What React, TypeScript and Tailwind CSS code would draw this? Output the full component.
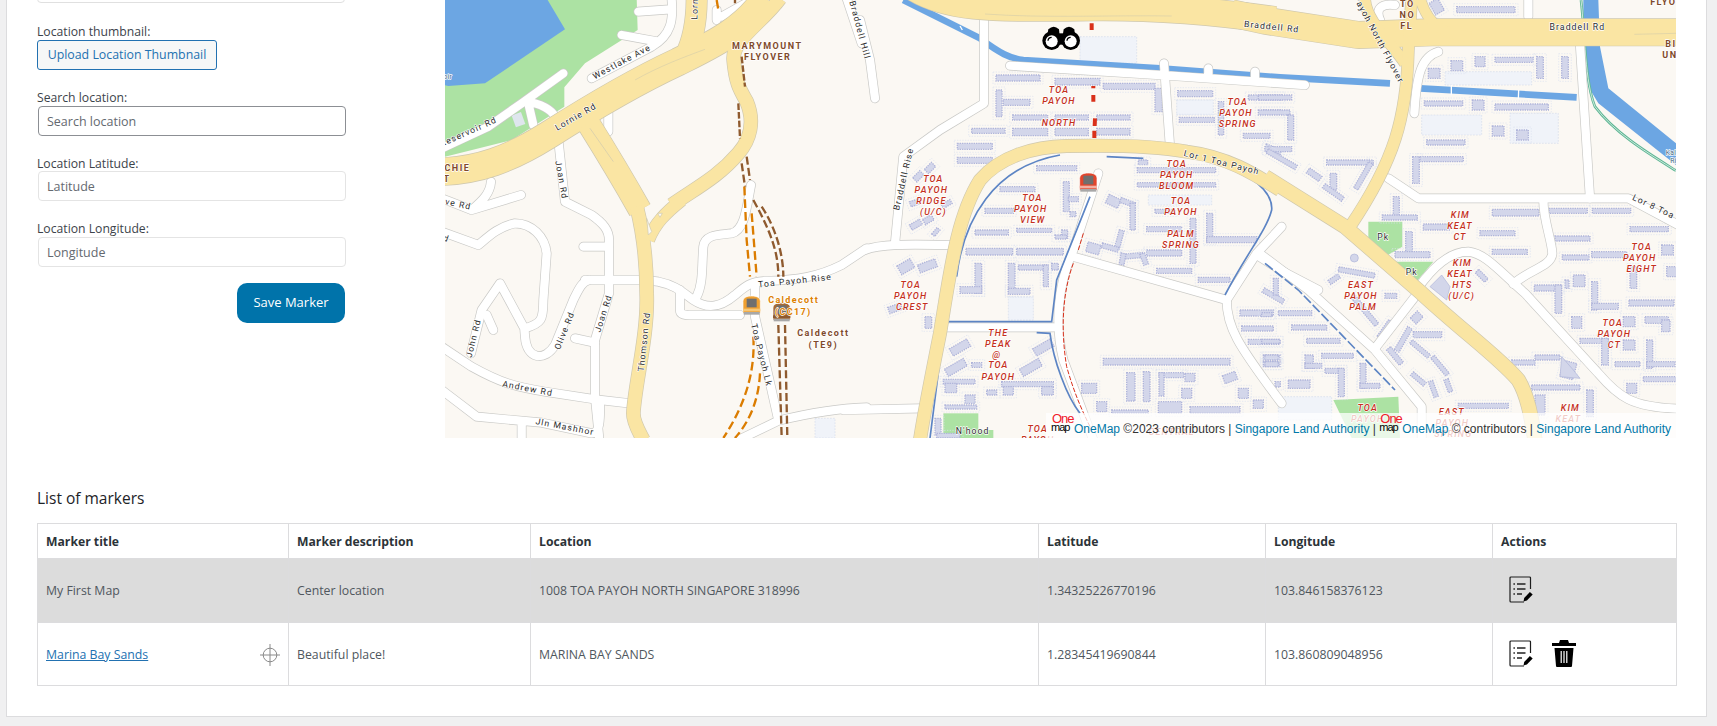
const land = "#fbf8f3";

type Bld = number[];

interface Area {
    x: number;
    minor: string[];
    major: [string, number][];
    blds: Bld[];
    estates: Bld[];
}

const areas: Area[] = [
    {
        x: 0,
        minor: [
            "M-10,445 L130,380 L230,310 L355,220",
            "M240,305 C290,310 320,330 330,350 M250,310 L265,375",
            "M440,235 L620,140 C680,105 685,60 680,0 M530,105 L640,125 M580,35 L675,28",
            "M340,420 L360,605 L440,645 C475,670 492,690 492,720 L492,880 L450,1020 L450,1190 L462,1310",
            "M415,740 L490,740 M390,1015 L450,1028",
            "M420,840 L600,840 L640,845 C690,855 710,875 745,900 C790,930 830,920 870,885 C900,860 915,845 960,843 C1060,840 1120,830 1190,795 L1265,745",
            "M432,840 C410,845 400,870 385,900 L330,1035 C300,1085 245,1080 240,1010 L238,985 L165,850 L110,930 L78,1060",
            "M240,985 C290,970 295,960 295,900 L305,760 C300,710 260,670 210,670 C160,680 130,710 100,735 L-10,695",
            "M125,945 L145,990",
            "M-10,1040 L80,1100 C170,1150 210,1160 300,1175 L450,1198 L570,1212",
            "M-10,1170 L95,1250 L290,1268 L440,1300 C465,1300 465,1260 465,1215 M230,1265 L230,1320",
            "M-10,595 L80,630 L228,585 M80,630 C115,600 135,580 138,545",
            "M705,870 L705,930 C705,945 720,945 735,945 L885,945",
            "M755,890 C775,850 770,800 775,740 C780,700 830,705 860,700 C900,690 905,620 918,555",
            "M930,850 L930,950 L1000,1260 M880,1320 L1000,1262 C1090,1240 1170,1225 1265,1222",
            "M490,320 L490,395",
            "M815,60 L815,30 M830,50 L920,0",
            "M1205,-5 L1250,130",
        ],
        major: [
            ["M-10,515 C100,510 190,480 310,405 C420,335 560,250 700,185 C790,140 900,90 960,-5", 82],
            ["M720,170 C750,110 755,50 755,-5", 62],
            ["M1005,-5 C950,70 860,120 866,180 C872,250 885,270 905,305 C930,365 915,420 880,460 C820,530 760,560 680,615", 40],
            ["M430,370 C480,450 540,550 585,630", 68],
            ["M575,620 C595,700 605,800 605,880 C610,1000 570,1150 565,1240 C565,1270 585,1300 595,1320", 40],
            ["M610,720 C630,670 660,640 710,600", 36],
        ],
        blds: [],
        estates: [[1110,1255,60,59]],
    },
    {
        x: 1245,
        minor: [
            "M0,60 L30,180 L45,295",
            "M372,50 L372,310 L240,390 L130,470 L105,730",
            "M15,750 C60,730 160,733 275,735",
            "M255,982 L580,982",
            "M715,520 L640,750 C590,860 585,980 610,1080 L700,1320",
            "M640,770 L1100,900 L1190,760 L1265,680",
            "M1100,900 C1100,980 1130,1030 1265,1210",
            "M450,197 L900,225 L1335,255 M912,190 L930,440 M1045,205 L1045,230 M1185,215 L1185,240",
            "M-50,1230 L180,1225",
            "M1190,765 L1270,815 L1375,870",
        ],
        major: [
            ["M150,-45 C260,30 400,25 700,22 C900,20 1100,40 1245,60", 80],
            ["M180,1320 C190,1250 210,1150 240,1000 C270,820 290,650 360,540 C420,470 520,440 620,438 C760,435 900,440 980,455 C1100,470 1180,520 1260,570", 38],
        ],
        blds: [
            [408,225,132,18],[585,235,135,20],[730,250,155,18],[885,265,22,70],[408,270,18,80],[430,298,80,18],
            [458,345,105,15],[585,345,100,15],[710,345,100,15],[458,385,105,22],[585,385,100,22],[710,385,100,20],
            [335,385,100,15],[292,430,105,18],[292,472,105,18],
            [160,520,30,18,-45],[195,495,30,18,-45],[150,600,30,16,-20],[245,605,30,14,-30],[150,665,35,18,-30],[190,650,30,18,-30],[215,690,25,12,-50],
            [420,560,105,15],[375,625,85,15],[345,690,100,15],[470,685,105,12],[530,497,120,15],[610,545,18,90],[625,590,30,15],[630,635,18,15],[605,690,18,25],[585,705,35,12],
            [318,745,140,20],[470,745,140,20],[345,790,20,90],[300,860,65,20],[445,790,20,90],[445,865,65,18],[475,795,90,15],[550,795,15,65],[575,790,20,20],
            [115,785,45,30,-30],[175,785,55,25,-20],[85,915,40,20,-20],[195,950,20,35],
            [270,1030,60,25,-30],[520,1030,60,25,-30],[255,1090,65,25,-30],[480,1090,65,25,-30],[335,1088,30,14],
            [250,1138,95,14],[255,1150,35,28],[380,1170,30,15],[315,1185,30,25],[255,1215,95,12],[425,1145,155,15],[430,1160,30,25],[545,1160,35,25],[225,1255,18,50],[230,1300,70,14],
            [835,480,28,14],[832,503,235,15],[832,548,235,13],[885,628,60,12],[860,680,105,15],[860,750,105,18],[890,805,105,15],[990,655,18,135],[1040,640,18,85],[1040,710,150,18],[1015,832,95,15],
            [740,590,40,28,25],[780,600,45,15,20],[810,610,16,80],[770,690,15,60,15],[680,730,40,30,15],[725,735,50,15,15],[790,760,60,15,-5],[780,760,15,35,10],[845,760,15,35,-20],
            [953,272,105,18],[1075,305,16,100],[958,352,105,15],[1150,400,80,15],[1165,285,100,15],[1210,330,55,12],[1215,440,50,15,20],
            [730,1075,380,20],[800,1118,25,85],[850,1115,20,90],[897,1118,75,15],[897,1118,15,70],[975,1120,30,25],[965,1165,30,30],[1090,1120,40,25,-20],[1135,1165,30,30],[665,1150,45,30],[710,1205,30,30],[895,1205,70,35],[990,1220,150,20],[1180,1200,30,25],[755,1230,110,10],
            [1140,930,100,18],[1145,978,95,15],[1165,1018,95,15],[1210,1065,50,15],[1210,1085,50,15],
        ],
        estates: [
            [660,110,170,80],[445,890,75,70],[865,585,190,30],[950,300,110,45],
        ],
    },
    {
        x: 2460,
        minor: [
            "M520,155 C470,170 455,220 448,340",
            "M370,535 L460,595 L1090,595 L1240,675",
            "M835,600 C835,660 860,720 862,760 C860,800 790,810 745,852",
            "M945,135 L975,595",
            "M455,870 C510,790 560,755 610,755 C660,760 700,810 780,880 L1000,1120 C1060,1190 1100,1222 1240,1226",
            "M-10,765 L130,870 L330,1050 L470,1220 L470,1320",
            "M330,1045 L450,890",
            "M345,60 C330,25 350,10 390,15",
            "M790,0 L790,50",
        ],
        major: [
            ["M-100,40 L0,62 L280,105 L500,97 L1240,97", 80],
            ["M0,530 L240,680 L470,880 C600,1000 700,1070 760,1140 C790,1190 800,1260 810,1320", 42],
            ["M300,-5 C300,60 380,130 420,190", 32],
            ["M440,-5 L430,150 C425,350 390,480 255,680", 34],
            ["M465,-5 C490,80 540,105 620,110", 30],
        ],
        blds: [
            [-20,285,100,15],[-20,330,95,15],[68,345,18,75],[0,440,80,15],[0,470,100,15,30],[125,515,45,18,35],[185,480,140,15],[195,520,20,50],[170,570,70,15,35],[250,520,90,15,-60],
            [690,172,115,15],[815,170,20,65],[890,170,20,65],[558,182,35,30],[630,170,30,30],[490,205,35,30],[575,20,175,18],[500,0,30,40,-30],
            [478,303,115,15],[622,300,35,30],[690,312,160,18],[682,378,35,30],[755,390,35,30],[485,420,115,15],[465,470,130,15],[443,470,20,80],
            [385,590,18,60],[352,645,105,15],[475,672,80,18],[645,692,105,15],[422,695,20,65],[390,755,105,18],[682,628,140,20],[852,625,115,15],[982,625,115,15],[682,748,105,15],
            [1095,680,115,15],[870,708,105,15],[892,765,80,15],[980,755,105,18],[925,825,35,35],[900,840,12,25],[808,855,80,18],[870,855,20,85],[980,845,18,85],[980,910,80,18],[1092,900,135,18],[1190,735,35,30],[1205,800,30,30],[1095,800,20,65],
            [920,950,30,35],[1075,950,35,30],[1075,1020,35,30],[1140,950,70,20],[1190,960,25,35],[945,1015,85,15],[1010,1015,20,80],[1145,1020,18,85],[1145,1085,85,15],[1050,1085,75,15],[1085,1150,30,30],[1135,1130,100,15],[740,1080,70,15],[810,1065,75,15],[890,1085,40,50,15],[800,1155,145,15],[965,1170,20,80],[810,1185,30,60],
            [190,830,35,15,-35],[220,810,110,15,10],[-10,880,70,15,30],[25,835,15,50],[-10,938,30,12],[40,932,100,15],[80,975,105,15],[-10,1018,55,12],[125,1015,100,15],[170,1060,95,15],[0,1065,40,15],[0,1085,40,15],[120,1065,25,40],[120,1090,50,15],[180,1105,55,15],[220,1105,18,85],[285,1090,18,75],[285,1150,60,15],[70,1140,65,25],[30,1145,16,16],
            [245,925,110,15,50],[330,980,60,15,-55],[360,880,35,15],[375,1010,80,16,-60],[440,940,30,25,-45],[445,995,85,18],[360,1060,60,16,50],[430,1040,70,14,40],[490,1090,70,14,50],[530,1150,40,14,70],[435,1130,50,14,40],[480,1160,50,14,70],[630,820,40,15,45],[580,1210,150,15],
        ],
        estates: [
            [470,345,180,60],[735,340,145,90],[540,215,260,40],[40,1190,160,70],
        ],
    },
];

type Kind = "red" | "road" | "brown" | "orange" | "small";

const labels: [number, number, string, number, Kind][] = [
    [392,350,"Lornie Rd",-30,"road"],[530,185,"Westlake Ave",-28,"road"],[70,395,"Reservoir Rd",-24,"road"],[-25,232,"Reservoir",0,"small"],
    [750,-10,"Lornie Rd",-88,"road"],[350,540,"Joan Rd",80,"road"],[475,940,"Joan Rd",-72,"road"],[358,992,"Olive Rd",-68,"road"],[85,1015,"John Rd",-76,"road"],
    [597,1025,"Thomson Rd",-84,"road"],[248,1165,"Andrew Rd",11,"road"],[360,1280,"Jln Mashhor",11,"road"],[1050,842,"Toa Payoh Rise",-6,"road"],[950,1065,"Toa Payoh Lk",76,"road"],
    [1245,90,"Braddell Hill",75,"road"],[20,608,"Olive Rd",12,"road"],[-5,712,"Rd",20,"road"],
    [967,137,"MARYMOUNT",0,"brown"],[968,170,"FLYOVER",0,"brown"],[10,503,"RITCHIE",0,"brown"],[-5,537,"CT",0,"brown"],[1135,998,"Caldecott",0,"brown"],[1135,1034,"(TE9)",0,"brown"],
    [1046,900,"Caldecott",0,"orange"],[1045,937,"(CC17)",0,"orange"],
    [1842,270,"TOA",0,"red"],[1842,302,"PAYOH",0,"red"],[1842,368,"NORTH",0,"red"],[1465,538,"TOA",0,"red"],[1459,571,"PAYOH",0,"red"],[1459,604,"RIDGE",0,"red"],[1465,637,"(U/C)",0,"red"],
    [1762,595,"TOA",0,"red"],[1757,628,"PAYOH",0,"red"],[1763,661,"VIEW",0,"red"],[1397,856,"TOA",0,"red"],[1397,889,"PAYOH",0,"red"],[1402,922,"CREST",0,"red"],
    [1660,998,"THE",0,"red"],[1660,1031,"PEAK",0,"red"],[1655,1066,"@",0,"red"],[1660,1096,"TOA",0,"red"],[1660,1130,"PAYOH",0,"red"],
    [2195,492,"TOA",0,"red"],[2195,525,"PAYOH",0,"red"],[2195,558,"BLOOM",0,"red"],[2208,604,"TOA",0,"red"],[2208,637,"PAYOH",0,"red"],[2208,703,"PALM",0,"red"],[2208,736,"SPRING",0,"red"],
    [2378,305,"TOA",0,"red"],[2373,338,"PAYOH",0,"red"],[2378,371,"SPRING",0,"red"],[1778,1287,"TOA",0,"red"],[1778,1320,"PAYOH",0,"red"],[2180,1297,"CENTRAL",0,"red"],
    [3046,645,"KIM",0,"red"],[3045,678,"KEAT",0,"red"],[3045,711,"CT",0,"red"],[3052,790,"KIM",0,"red"],[3045,823,"KEAT",0,"red"],[3052,856,"HTS",0,"red"],[3050,889,"(U/C)",0,"red"],
    [2748,855,"EAST",0,"red"],[2748,888,"PAYOH",0,"red"],[2754,921,"PALM",0,"red"],[3590,742,"TOA",0,"red"],[3584,775,"PAYOH",0,"red"],[3590,808,"EIGHT",0,"red"],
    [3503,968,"TOA",0,"red"],[3508,1001,"PAYOH",0,"red"],[3508,1034,"CT",0,"red"],[2768,1224,"TOA",0,"red"],[2768,1258,"PAYOH",0,"red"],[3020,1237,"EAST",0,"red"],[3022,1270,"PAYOH",0,"red"],[3025,1303,"SPRING",0,"red"],[3376,1224,"KIM",0,"red"],[3370,1258,"KEAT",0,"red"],
    [1583,1293,"N'hood",0,"road"],[1375,537,"Braddell Rise",-77,"road"],[2330,487,"Lor 1 Toa Payoh",14,"road"],[2480,80,"Braddell Rd",6,"road"],[3397,82,"Braddell Rd",0,"road"],
    [2787,90,"Toa Payoh North Flyover",62,"road"],[3670,640,"Lor 8 Toa Payoh",25,"road"],[2815,712,"Pk",0,"road"],[2900,815,"Pk",0,"road"],[3678,460,"Kal",0,"small"],[3685,482,"Ri",0,"small"],
    [2887,12,"TO",0,"brown"],[2887,44,"NO",0,"brown"],[2885,77,"FL",0,"brown"],[3678,133,"BI",0,"brown"],[3675,166,"UN",0,"brown"],[3655,5,"FLYO",0,"brown"],
];

const labelStyle: Record<Kind, { fill: string; size: number; spacing: number; italic: boolean; weight: number }> = {
    red: { fill: "#c5301c", size: 27, spacing: 3.5, italic: true, weight: 500 },
    road: { fill: "#2b2b2b", size: 26, spacing: 3.2, italic: false, weight: 400 },
    brown: { fill: "#7f4a2c", size: 27, spacing: 4.5, italic: false, weight: 700 },
    orange: { fill: "#dd8000", size: 27, spacing: 4, italic: false, weight: 700 },
    small: { fill: "#3f5f80", size: 20, spacing: 1, italic: false, weight: 400 },
};

function Train({ x, y, body, stripe }: { x: number; y: number; body: string; stripe: string }) {
    return (
        <g transform={`translate(${x} ${y})`}>
            <path d="M-26,24 L-26,-12 C-26,-24 -14,-28 0,-28 C14,-28 26,-24 26,-12 L26,24 Z" fill={body} stroke="#fff" strokeWidth="2" />
            <rect x="-15" y="-20" width="30" height="26" fill="#6f6f6f" />
            <rect x="-26" y="10" width="52" height="8" fill={stripe} />
            <rect x="-24" y="20" width="48" height="8" fill="#a8a8a8" />
        </g>
    );
}

function MapDrawing() {
    return (
        <svg viewBox="0 0 3693 1314" className="block h-full w-full" style={{ fontFamily: "Roboto, sans-serif" }}>
            <rect width="3693" height="1314" fill={land} />
            {/* park and reservoir */}
            <path d="M-5,-5 L575,-5 L578,90 L420,190 L358,262 L358,320 L200,420 L0,470 Z" fill="#ace2a3" />
            <path d="M-5,-5 L305,-5 L360,88 L120,250 L10,258 L-5,255 Z" fill="#6ca6e3" />
            <rect x="205" y="340" width="30" height="38" fill="#dfe6ee" transform="rotate(-20 220 358)" />
            <rect x="1495" y="1240" width="105" height="74" fill="#ace2a3" />
            <rect x="1555" y="1290" width="90" height="24" fill="#ace2a3" />
            <path d="M2770,665 L2872,665 L2872,740 L2820,770 L2770,720 Z" fill="#ace2a3" />
            <path d="M2840,785 L2965,785 L2910,850 Z" fill="#ace2a3" />
            <path d="M2665,1200 L2860,1190 L2865,1314 L2720,1314 Z" fill="#ace2a3" />

            {/* estates and blocks */}
            {areas.map((a) => (
                <g key={a.x} transform={`translate(${a.x} 0)`}>
                    {a.estates.map((e, i) => (
                        <rect key={i} x={e[0]} y={e[1]} width={e[2]} height={e[3]} fill="#f0f3f9" stroke="#d5dcec" strokeWidth="2" strokeDasharray="5 4" />
                    ))}
                    {a.blds.map((b, i) => (
                        <g key={i} transform={b[4] ? `rotate(${b[4]} ${b[0] + b[2] / 2} ${b[1] + b[3] / 2})` : undefined}>
                            <rect x={b[0] - 9} y={b[1] - 9} width={b[2] + 18} height={b[3] + 18} fill="none" stroke="#dde2f0" strokeWidth="2" strokeDasharray="4 4" />
                            <rect x={b[0]} y={b[1]} width={b[2]} height={b[3]} fill="#d3d6ea" stroke="#b0b5da" strokeWidth="4" strokeDasharray="4 3" />
                        </g>
                    ))}
                </g>
            ))}
            <path d="M2955,860 L2990,825 L3015,860 L3005,900 L2980,880 Z" fill="#d3d6ea" stroke="#aeb3d8" strokeWidth="2" />
            <path d="M3345,1130 L3350,1070 L3385,1110 L3405,1135 Z" fill="#d3d6ea" stroke="#aeb3d8" strokeWidth="2" />
            <circle cx="2728" cy="774" r="12" fill="#d3d6ea" stroke="#aeb3d8" strokeWidth="2" />

            {/* canal and river */}
            <path d="M1375,0 L1605,115 C1665,160 1695,175 1735,180 L2145,205 L2505,232 L2835,250 M2925,265 L3395,292" fill="none" stroke="#6ca6e3" strokeWidth="20" />
            <path d="M1545,78 L1552,90 M3019,256 L3019,286 M3221,270 L3220,298" stroke="#ffffff" strokeWidth="4" />
            <path d="M3415,0 L3460,0 L3465,140 L3490,265 L3693,430 L3693,495 L3460,310 L3430,260 L3415,140 Z" fill="#6ca6e3" />
            <path d="M3408,0 C3420,100 3420,250 3450,320 C3510,400 3610,460 3693,512" fill="none" stroke="#5fb795" strokeWidth="8" />
            <path d="M3408,0 C3420,100 3420,250 3450,320 C3510,400 3610,460 3693,512" fill="none" stroke="#ffffff" strokeWidth="2" />

            {/* minor roads */}
            {areas.map((a) => (
                <g key={a.x} transform={`translate(${a.x} 0)`} fill="none" strokeLinecap="round" strokeLinejoin="round">
                    {a.minor.map((d, i) => (
                        <path key={i} d={d} stroke="#c9c9c6" strokeWidth="29" />
                    ))}
                </g>
            ))}
            {areas.map((a) => (
                <g key={a.x} transform={`translate(${a.x} 0)`} fill="none" strokeLinecap="round" strokeLinejoin="round">
                    {a.minor.map((d, i) => (
                        <path key={i} d={d} stroke="#ffffff" strokeWidth="25" />
                    ))}
                </g>
            ))}

            {/* thin blue service lines */}
            <g fill="none" stroke="#5c84c4" strokeWidth="5">
                <path d="M1505,965 L1820,965 L1835,840 L1935,590 M1535,830 C1555,660 1645,500 1845,465 M1985,470 L2095,475 M2355,505 C2405,520 2485,570 2480,630 C2465,690 2405,760 2340,885" />
                <path d="M1495,1000 L1455,1314 M1775,998 L1815,1000 C1825,1080 1865,1190 1905,1240" />
                <path d="M2460,790 L2560,870 L2850,1170" strokeDasharray="30 8" />
            </g>

            {/* motorways */}
            {areas.map((a) => (
                <g key={a.x} transform={`translate(${a.x} 0)`} fill="none" strokeLinecap="butt" strokeLinejoin="round">
                    {a.major.map(([d, w], i) => (
                        <path key={i} d={d} stroke="#cfc8ae" strokeWidth={w + 4} />
                    ))}
                </g>
            ))}
            {areas.map((a) => (
                <g key={a.x} transform={`translate(${a.x} 0)`} fill="none" strokeLinecap="butt" strokeLinejoin="round">
                    {a.major.map(([d, w], i) => (
                        <path key={i} d={d} stroke="#fae5a3" strokeWidth={w} />
                    ))}
                </g>
            ))}
            <path d="M570,240 C640,200 720,170 780,148 M1620,42 C1800,55 2000,45 2180,48 M3568,103 L3693,100" fill="none" stroke="#d8cfa9" strokeWidth="2" />
            <path d="M605,655 L620,695 L610,705 Z M638,640 L652,640 L645,652 Z" fill={land} stroke="#cfc8ae" strokeWidth="2" />
            <path d="M435,385 L505,485" fill="none" stroke="#cfc8ae" strokeWidth="2" />

            {/* rail */}
            <g fill="none" stroke="#8f5a2e" strokeWidth="7" strokeDasharray="24 10">
                <path d="M890,490 L900,560 M905,470 L915,540 M925,600 C980,700 1000,760 1000,830 M950,620 C990,680 1015,760 1015,830 M1000,975 L1010,1314 M1020,975 L1027,1314" />
                <path d="M880,310 L885,415 M890,170 L900,260 M870,0 L870,10" strokeDasharray="20 6" />
            </g>
            <g fill="none" stroke="#db7c00" strokeWidth="7" strokeDasharray="26 12">
                <path d="M898,560 L905,720 L915,830 M920,640 L935,830 M925,1010 C930,1100 910,1200 835,1314 M945,1120 C940,1220 900,1280 870,1314 M815,0 L820,30" />
            </g>
            <g fill="none" stroke="#d9301a">
                <path d="M1940,70 L1940,90 M1945,258 L1945,265 M1945,285 L1945,305 M1950,355 L1949,378 M1948,392 L1948,414" strokeWidth="12" />
                <path d="M1915,700 L1900,750 M1885,790 C1855,870 1845,980 1865,1100 C1885,1170 1905,1220 1940,1290" strokeWidth="3" strokeDasharray="14 5" />
            </g>

            <Train x={920} y={916} body="#f0a030" stripe="#f7c878" />
            <Train x={1010} y={936} body="#a66a35" stripe="#8f5a2e" />
            <Train x={1930} y={547} body="#e2452c" stripe="#f2b0a4" />

            {/* binoculars */}
            <g fill="#000">
                <path d="M1804,125 L1810,88 Q1826,72 1842,88 L1846,125 Z" />
                <path d="M1892,125 L1888,88 Q1872,72 1856,88 L1850,125 Z" />
                <rect x="1840" y="100" width="18" height="34" />
                <circle cx="1820" cy="122" r="28" />
                <circle cx="1877" cy="122" r="28" />
                <circle cx="1820" cy="124" r="18" fill="#fff" />
                <circle cx="1877" cy="124" r="18" fill="#fff" />
                <path d="M1807,122 A13,13 0 0 1 1820,110 L1820,114 A9,9 0 0 0 1811,122 Z M1864,122 A13,13 0 0 1 1877,110 L1877,114 A9,9 0 0 0 1868,122 Z" />
            </g>

            {/* labels */}
            <g textAnchor="middle" dominantBaseline="central" stroke="#ffffff" strokeWidth="4" paintOrder="stroke" strokeLinejoin="round">
                {labels.map(([x, y, text, rot, kind], i) => {
                    const s = labelStyle[kind];
                    return (
                        <text
                            key={i}
                            x={x}
                            y={y}
                            fill={s.fill}
                            fontSize={s.size}
                            fontWeight={s.weight}
                            fontStyle={s.italic ? "italic" : "normal"}
                            letterSpacing={s.spacing}
                            transform={rot ? `rotate(${rot} ${x} ${y})` : undefined}
                        >
                            {text}
                        </text>
                    );
                })}
            </g>
        </svg>
    );
}

function OneMapLogo() {
    return (
        <span className="relative mr-[5px] inline-block h-[24px] w-[18px] align-bottom font-['Liberation_Sans',sans-serif] leading-[11px]">
            <span className="absolute left-[1px] top-0 text-[13px] tracking-[-1px] text-[#f0202a]">One</span>
            <span className="absolute left-0 top-[9px] text-[11px] tracking-[-1px] text-black">map</span>
        </span>
    );
}

function ListEditIcon() {
    return (
        <svg viewBox="0 0 24 27" className="h-[27px] w-[24px]">
            <path d="M21.5 13V2a1 1 0 0 0-1-1H2a1 1 0 0 0-1 1v23a1 1 0 0 0 1 1h13" fill="none" stroke="#1d1d1d" strokeWidth="1.2" />
            <path d="M4.5 8h1.3M4.5 13h1.3M4.5 18h1.3" stroke="#000" strokeWidth="1.6" />
            <path d="M8 8h8.5M8 13h8.5M8 18h5" stroke="#222" strokeWidth="1.4" />
            <path d="M14.5 25.5l.7-3.5 5.7-6 2.8 2.6-5.8 6z" fill="#000" />
        </svg>
    );
}

function TrashIcon() {
    return (
        <svg viewBox="0 0 24 27" className="h-[27px] w-[24px]">
            <path d="M8 0h8l1 3h7v3H0V3h7z" fill="#000" />
            <path d="M2.5 8h19l-1.5 18a1 1 0 0 1-1 1H5a1 1 0 0 1-1-1z" fill="#000" />
            <path d="M9.2 11v12M12 11v12M14.8 11v12" stroke="#fff" strokeWidth="1.2" />
        </svg>
    );
}

function CrosshairIcon() {
    return (
        <svg viewBox="0 0 20 22" className="h-[22px] w-[20px]" fill="none" stroke="#8a8a8a" strokeWidth="1">
            <circle cx="10" cy="11" r="6.8" />
            <path d="M10 0v22M0 11h20" />
        </svg>
    );
}

const fieldLabel = "block h-[18px] text-[12.2px] leading-[20px] text-[#3c434a]";
const cell = "border border-[#dcdcde] px-[8px] pt-[2px] text-[12.3px] text-[#50575e] font-normal";
const head = "border border-[#dcdcde] px-[8px] pt-[2px] text-left text-[12.2px] font-bold text-[#2c3338]";

export default function App() {
    return (
        <div className="h-[726px] overflow-hidden bg-[#f0f0f1] font-['Open_Sans',sans-serif]">
            <div className="ml-[6px] mr-[10px] -mt-[30px] border border-[#dcdcde] bg-white px-[30px] pb-[30px]">
                <div className="grid grid-cols-[408px_1231px]">
                    <div className="flex h-[467px] w-[309px] flex-col">
                        <input className="mt-[2px] h-[30px] w-[308px] rounded-[4px] border border-[#e0e0e0]" readOnly />
                        <label className={`${fieldLabel} mt-[19px]`}>Location thumbnail:</label>
                        <button className="h-[30px] w-[180px] rounded-[3px] border border-[#2271b1] bg-[#f6f7f7] text-[12.35px] text-[#2271b1]">
                            Upload Location Thumbnail
                        </button>
                        <label className={`${fieldLabel} mt-[18px]`}>Search location:</label>
                        <input
                            className="ml-[1px] h-[30px] w-[308px] rounded-[4px] border border-[#8c8f94] px-[8px] text-[12.5px] text-[#50575e] placeholder:text-[#646970]"
                            placeholder="Search location"
                        />
                        <label className={`${fieldLabel} mt-[18px] !h-[17px]`}>Location Latitude:</label>
                        <input
                            className="ml-[1px] h-[30px] w-[308px] rounded-[4px] border border-[#e4e4e4] px-[8px] text-[12.5px] placeholder:text-[#646970]"
                            placeholder="Latitude"
                        />
                        <label className={`${fieldLabel} mt-[18px]`}>Location Longitude:</label>
                        <input
                            className="ml-[1px] h-[30px] w-[308px] rounded-[4px] border border-[#e4e4e4] px-[8px] text-[12.5px] placeholder:text-[#646970]"
                            placeholder="Longitude"
                        />
                        <button className="ml-[200px] mt-[16px] h-[40px] w-[108px] rounded-[10px] bg-[#0073aa] text-[13px] text-white">
                            Save Marker
                        </button>
                    </div>
                    <div className="relative h-[438px] self-end">
                        <MapDrawing />
                        <div className="absolute bottom-0 right-0 flex h-[25px] w-[630px] items-end bg-white/75 pb-[1px] pl-[5px] font-['Liberation_Sans',sans-serif] text-[12px] leading-[16px] text-[#333]">
                            <OneMapLogo />
                            <a className="text-[#0078a8]">OneMap</a>
                            <span className="whitespace-pre"> ©2023 contributors | </span>
                            <a className="text-[#0078a8]">Singapore Land Authority</a>
                            <span className="whitespace-pre"> | </span>
                            <OneMapLogo />
                            <a className="text-[#0078a8]">OneMap</a>
                            <span className="whitespace-pre"> © contributors | </span>
                            <a className="text-[#0078a8]">Singapore Land Authority</a>
                        </div>
                    </div>
                </div>

                <h2 className="mt-[50px] text-[15.5px] font-medium leading-[20px] text-[#1d2327]">List of markers</h2>
                <table className="mt-[15px] w-[1639px] table-fixed border-collapse">
                    <colgroup>
                        <col className="w-[251px]" />
                        <col className="w-[242px]" />
                        <col className="w-[508px]" />
                        <col className="w-[227px]" />
                        <col className="w-[227px]" />
                        <col className="w-[184px]" />
                    </colgroup>
                    <thead>
                        <tr className="h-[35px]">
                            <th className={head}>Marker title</th>
                            <th className={head}>Marker description</th>
                            <th className={head}>Location</th>
                            <th className={head}>Latitude</th>
                            <th className={head}>Longitude</th>
                            <th className={head}>Actions</th>
                        </tr>
                    </thead>
                    <tbody>
                        <tr className="h-[64px] bg-[#dcdcdc]">
                            <td className={cell}>My First Map</td>
                            <td className={cell}>Center location</td>
                            <td className={cell}>1008 TOA PAYOH NORTH SINGAPORE 318996</td>
                            <td className={cell}>1.34325226770196</td>
                            <td className={cell}>103.846158376123</td>
                            <td className={cell}>
                                <div className="mb-[4px] ml-[8px] flex items-center">
                                    <ListEditIcon />
                                </div>
                            </td>
                        </tr>
                        <tr className="h-[63px]">
                            <td className={cell}>
                                <div className="flex items-center justify-between">
                                    <a className="text-[#2271b1] underline">Marina Bay Sands</a>
                                    <CrosshairIcon />
                                </div>
                            </td>
                            <td className={cell}>Beautiful place!</td>
                            <td className={cell}>MARINA BAY SANDS</td>
                            <td className={cell}>1.28345419690844</td>
                            <td className={cell}>103.860809048956</td>
                            <td className={cell}>
                                <div className="mb-[4px] ml-[8px] flex items-center gap-[19px]">
                                    <ListEditIcon />
                                    <TrashIcon />
                                </div>
                            </td>
                        </tr>
                    </tbody>
                </table>
            </div>
        </div>
    );
}
